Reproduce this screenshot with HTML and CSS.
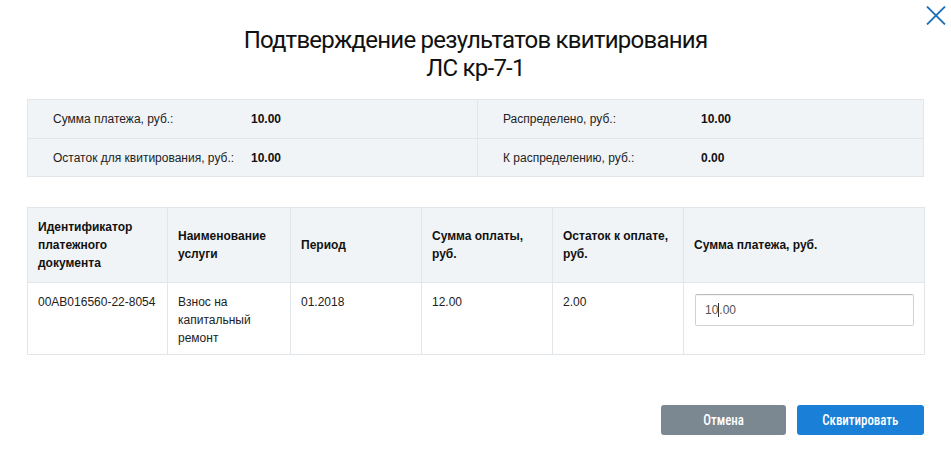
FILE: index.html
```html
<!DOCTYPE html>
<html lang="ru">
<head>
<meta charset="utf-8">
<title>Подтверждение результатов квитирования</title>
<link rel="stylesheet" href="styles.css">
</head>
<body>
<div class="modal">
  <button class="close" aria-label="Закрыть">
    <svg width="20" height="19" viewBox="0 0 20 19"><path d="M1 0.5 L19 18.5 M19 0.5 L1 18.5" stroke="#1f72b6" stroke-width="1.8" fill="none"/></svg>
  </button>
  <h1 class="title">Подтверждение результатов квитирования<br>ЛС кр-7-1</h1>

  <div class="summary">
    <div class="cell"><span class="lbl">Сумма платежа, руб.:</span><span class="val">10.00</span></div>
    <div class="cell right"><span class="lbl">Распределено, руб.:</span><span class="val">10.00</span></div>
    <div class="cell bottom"><span class="lbl">Остаток для квитирования, руб.:</span><span class="val">10.00</span></div>
    <div class="cell right bottom"><span class="lbl">К распределению, руб.:</span><span class="val">0.00</span></div>
  </div>

  <table class="grid">
    <colgroup>
      <col class="c1"><col class="c2"><col class="c3"><col class="c4"><col class="c5"><col class="c6">
    </colgroup>
    <thead>
      <tr>
        <th>Идентификатор платежного документа</th>
        <th>Наименование услуги</th>
        <th>Период</th>
        <th>Сумма оплаты, руб.</th>
        <th>Остаток к оплате, руб.</th>
        <th>Сумма платежа, руб.</th>
      </tr>
    </thead>
    <tbody>
      <tr>
        <td>00AB016560-22-8054</td>
        <td>Взнос на капитальный ремонт</td>
        <td>01.2018</td>
        <td>12.00</td>
        <td>2.00</td>
        <td><div class="input">10<span class="caret"></span>.00</div></td>
      </tr>
    </tbody>
  </table>

  <div class="actions">
    <button class="btn cancel"><span class="btn-label">Отмена</span></button>
    <button class="btn primary"><span class="btn-label">Сквитировать</span></button>
  </div>
</div>
</body>
</html>
```

FILE: styles.css
```css
* { box-sizing: border-box; }
html, body { margin: 0; padding: 0; background: #fff; }
body {
  font-family: "Liberation Sans", Arial, sans-serif;
  font-size: 12px;
  color: #222;
}
.modal {
  position: relative;
  width: 951px;
  height: 451px;
  padding: 26px 27px 0 27px;
}
.close {
  position: absolute;
  top: 6px;
  right: 5px;
  width: 20px;
  height: 19px;
  padding: 0;
  border: 0;
  background: transparent;
  cursor: pointer;
}
.close svg { display: block; }
.title {
  margin: 0 0 17px 0;
  font-family: Roboto, sans-serif;
  font-weight: 400;
  font-size: 24px;
  line-height: 28px;
  letter-spacing: -0.75px;
  text-align: center;
  color: #111;
}
.summary {
  display: grid;
  grid-template-columns: 449px 1fr;
  background: #f1f4f7;
  border: 1px solid #e1e6eb;
}
.summary .cell {
  display: flex;
  align-items: center;
  height: 38px;
  padding-left: 25px;
}
.summary .cell.right { border-left: 1px solid #e1e6eb; }
.summary .cell.bottom { border-top: 1px solid #e1e6eb; }
.summary .lbl { width: 198px; color: #222; }
.summary .val { font-weight: bold; color: #111; }

.grid {
  width: 897px;
  margin-top: 30px;
  border-collapse: collapse;
  table-layout: fixed;
}
.grid col.c1 { width: 140px; }
.grid col.c2 { width: 123px; }
.grid col.c3 { width: 131px; }
.grid col.c4 { width: 131px; }
.grid col.c5 { width: 131px; }
.grid col.c6 { width: 241px; }
.grid th, .grid td {
  border: 1px solid #e1e6eb;
  padding: 0 10px;
  text-align: left;
  line-height: 18px;
}
.grid th {
  background: #f1f4f7;
  height: 75px;
  font-weight: bold;
  color: #111;
  vertical-align: middle;
}
.grid td {
  height: 72px;
  vertical-align: top;
  padding-top: 10px;
  padding-bottom: 7px;
  color: #222;
}
.grid td:last-child { padding-top: 11px; padding-left: 11px; }
.input {
  width: 219px;
  height: 32px;
  border: 1px solid #cfd3d7;
  border-top-color: #b9bdc1;
  border-radius: 2px;
  box-shadow: inset 0 1px 1px rgba(0,0,0,0.06);
  padding: 0 9px;
  line-height: 30px;
  color: #555;
  background: #fff;
}
.caret {
  display: inline-block;
  width: 1px;
  height: 14px;
  background: #333;
  vertical-align: -3px;
}
.actions {
  display: flex;
  justify-content: flex-end;
  gap: 11px;
  margin-top: 50px;
}
.btn {
  height: 30px;
  border: 0;
  border-radius: 3px;
  padding: 0;
  font-family: "Roboto Condensed", Roboto, sans-serif;
  font-size: 15px;
  font-weight: 500;
  color: #fff;
  cursor: pointer;
  display: flex;
  align-items: center;
  justify-content: center;
}
.btn-label { display: inline-block; transform: scaleX(0.86); }
.cancel { width: 125px; background: #7b8791; }
.primary { width: 127px; background: #1a7fd6; }
```
